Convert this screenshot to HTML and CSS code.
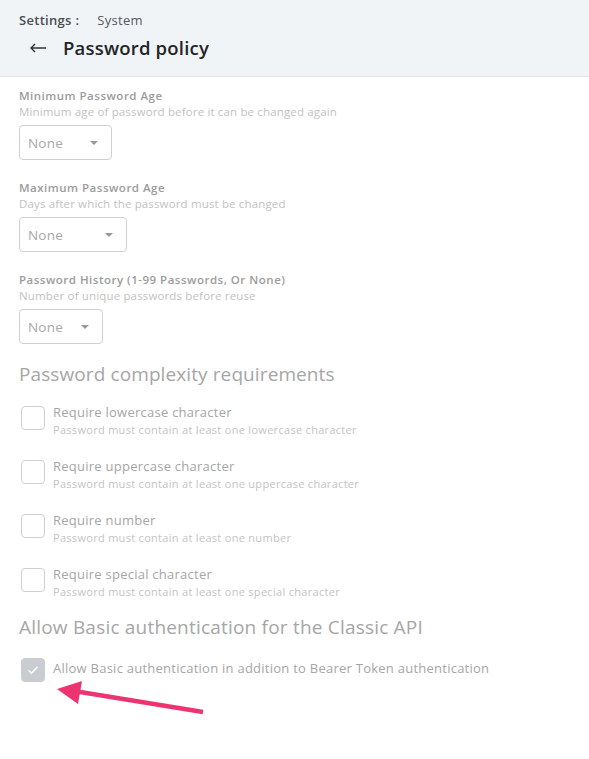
FILE: index.html
```html
<!DOCTYPE html>
<html>
<head>
<meta charset="utf-8">
<link rel="stylesheet" href="styles.css">
</head>
<body>
<header class="page-header">
  <div class="crumbs"><span class="crumb-root">Settings :</span><span class="crumb-leaf">System</span></div>
  <div class="title-row">
    <svg class="back" width="18" height="10" viewBox="0 0 18 10"><path d="M17 5H2M6 1L2 5l4 4" fill="none" stroke="#333" stroke-width="1.4"/></svg>
    <h1 class="title">Password policy</h1>
  </div>
</header>
<main class="content">
  <div class="field">
    <div class="field-label">Minimum Password Age</div>
    <div class="field-desc">Minimum age of password before it can be changed again</div>
    <div class="select w1"><span>None</span><span class="caret"></span></div>
  </div>
  <div class="field">
    <div class="field-label">Maximum Password Age</div>
    <div class="field-desc">Days after which the password must be changed</div>
    <div class="select w2"><span>None</span><span class="caret"></span></div>
  </div>
  <div class="field">
    <div class="field-label">Password History (1-99 Passwords, Or None)</div>
    <div class="field-desc">Number of unique passwords before reuse</div>
    <div class="select w3"><span>None</span><span class="caret"></span></div>
  </div>

  <h2 class="section">Password complexity requirements</h2>
  <div class="check-list">
    <div class="check"><span class="box"></span><div><div class="check-label">Require lowercase character</div><div class="check-desc">Password must contain at least one lowercase character</div></div></div>
    <div class="check"><span class="box"></span><div><div class="check-label">Require uppercase character</div><div class="check-desc">Password must contain at least one uppercase character</div></div></div>
    <div class="check"><span class="box"></span><div><div class="check-label">Require number</div><div class="check-desc">Password must contain at least one number</div></div></div>
    <div class="check"><span class="box"></span><div><div class="check-label">Require special character</div><div class="check-desc">Password must contain at least one special character</div></div></div>
  </div>

  <h2 class="section s2">Allow Basic authentication for the Classic API</h2>
  <div class="check checked">
    <span class="box on"><svg width="12" height="10" viewBox="0 0 12 10"><path d="M1.5 5.2l3 3L10.5 1.8" fill="none" stroke="#fff" stroke-width="1.4"/></svg></span>
    <div class="check-label">Allow Basic authentication in addition to Bearer Token authentication</div>
  </div>
  <div class="callout">
    <svg width="160" height="40" viewBox="0 0 160 40"><line x1="153" y1="35" x2="24" y2="14" stroke="#ee3470" stroke-width="4.5"/><polygon points="7,12 32,4 28,27" fill="#ee3470"/></svg>
  </div>
</main>
</body>
</html>
```
FILE: styles.css
```css
body {
  margin: 0;
  font-family: "Open Sans", "Lato", sans-serif;
  background: #fff;
}
.page-header {
  background: #f1f4f7;
  border-bottom: 1px solid #dfe3e8;
  height: 77px;
  box-sizing: border-box;
  padding: 11px 19px 0;
}
.crumbs {
  font-size: 13px;
  color: #444;
  line-height: 18px;
  letter-spacing: 0.3px;
}
.crumb-root {
  font-weight: 600;
  color: #4a4d52;
  margin-right: 18px;
}
.crumb-leaf { color: #55585c; }
.title-row {
  display: flex;
  align-items: center;
  margin-top: 7px;
  padding-left: 10px;
}
.back { margin-right: 16px; }
.title {
  margin: 0;
  font-size: 18.5px;
  font-weight: 600;
  color: #222427;
  line-height: 24px;
  letter-spacing: 0.2px;
}
.content {
  padding: 11px 19px 0;
}
.field { margin-bottom: 20px; }
.field-label {
  font-size: 11.5px;
  font-weight: 600;
  color: #9c9c9c;
  line-height: 16px;
  letter-spacing: 0.5px;
}
.field-desc {
  font-size: 11.5px;
  color: #c2c2c2;
  line-height: 16px;
  letter-spacing: 0.15px;
}
.select {
  margin-top: 5px;
  height: 35px;
  box-sizing: border-box;
  border: 1px solid #d0d0d0;
  border-radius: 4px;
  display: flex;
  align-items: center;
  justify-content: space-between;
  padding: 0 13px 0 8px;
  font-size: 13.5px;
  color: #a8a8a8;
  letter-spacing: 0.2px;
}
.w1 { width: 93px; }
.w2 { width: 108px; }
.w3 { width: 84px; }
.caret {
  width: 0;
  height: 0;
  border-left: 4px solid transparent;
  border-right: 4px solid transparent;
  border-top: 4px solid #999;
}
.section {
  margin: -2px 0 20px;
  font-size: 19px;
  font-weight: 400;
  color: #a6a6a6;
  line-height: 24px;
  letter-spacing: 0.1px;
}
.s2 { margin-top: 15px; margin-bottom: 19px; letter-spacing: 0.2px; }
.check-list {
  display: flex;
  flex-direction: column;
  gap: 22px;
}
.check {
  display: flex;
  align-items: flex-start;
  padding-left: 2px;
}
.box {
  width: 24px;
  height: 24px;
  box-sizing: border-box;
  border: 1px solid #cfcfcf;
  border-radius: 4px;
  margin-right: 8px;
  flex: none;
  display: flex;
  align-items: center;
  justify-content: center;
}
.box.on {
  background: #c9ccd0;
  border-color: #c9ccd0;
}
.check-label {
  font-size: 13px;
  color: #a6a6a6;
  line-height: 18px;
  margin-top: -3px;
  letter-spacing: 0.25px;
}
.check-desc {
  font-size: 11px;
  color: #c4c4c4;
  line-height: 16px;
  margin-top: 1px;
  letter-spacing: 0.3px;
}
.checked .check-label { margin-top: 1px; }
.callout {
  margin: -5px 0 0 31px;
  width: 160px;
  height: 40px;
}
.callout svg { display: block; }
```
